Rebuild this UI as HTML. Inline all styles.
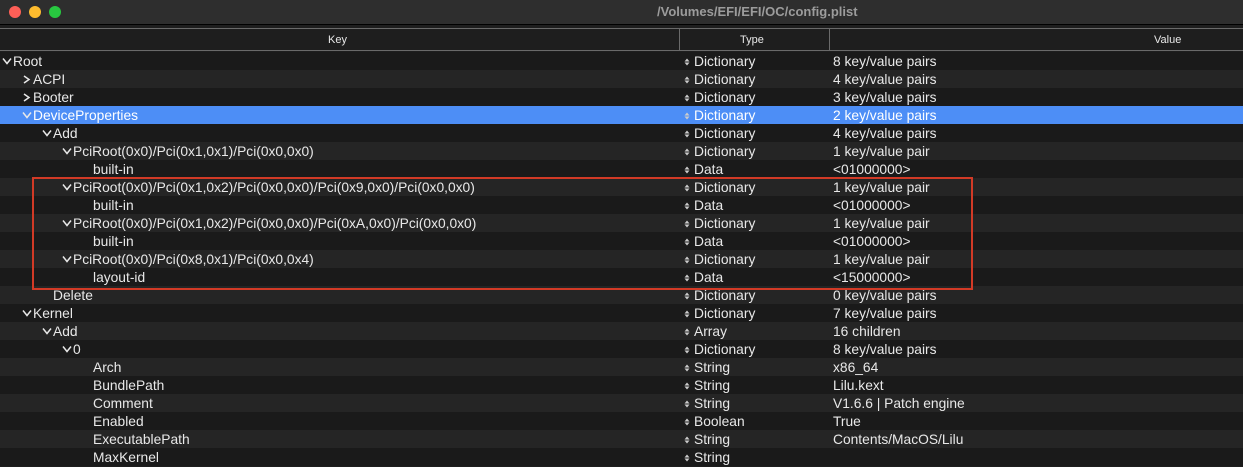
<!DOCTYPE html>
<html><head><style>
*{margin:0;padding:0;box-sizing:border-box}
body{width:1243px;height:456px;background:#1e1e1e;font-family:"Liberation Sans",sans-serif;color:#e8e8e8;font-size:13.8px;overflow:hidden;position:relative}
.tb{position:absolute;left:0;top:0;width:1243px;height:25px;background:#2e2e2e;border-bottom:1px solid #000}
.dot{position:absolute;top:6px;width:12px;height:12px;border-radius:50%}
.title{position:absolute;left:657px;top:4px;font-weight:bold;color:#9c9c9c;font-size:13px}
.hd{position:absolute;left:0;top:28px;width:1243px;height:23px;background:#1e1e1e;border-top:1px solid #6a6a6a;border-bottom:1px solid #6a6a6a;font-size:11px}
.hd span{position:absolute;top:5px}
.vs{position:absolute;top:0;width:1px;height:22px;background:#6a6a6a}
.row{position:absolute;left:0;width:1243px;height:18px;line-height:19px}
.row span{position:absolute;top:0;white-space:nowrap}
.e{background:#1a1a1a}.o{background:#252525}
.sel{background:#4d8ef6!important;color:#fff}
.row svg{position:absolute;top:5px}
.ar{font-size:10px;color:#ccc}
.box{position:absolute;left:32px;top:177px;width:941px;height:113px;border:2.5px solid #d23a26}
</style></head><body>
<div class="tb">
<div class="dot" style="left:9px;background:#fe5f57"></div>
<div class="dot" style="left:29px;background:#febc2e"></div>
<div class="dot" style="left:49px;background:#28c840"></div>
<div class="title">/Volumes/EFI/EFI/OC/config.plist</div>
</div>
<div class="hd">
<span style="left:328px">Key</span>
<div class="vs" style="left:679px"></div>
<span style="left:740px">Type</span>
<div class="vs" style="left:829px"></div>
<span style="left:1154px">Value</span>
</div>
<div id="rows"></div>
<div class="box"></div>
<script>
var d=[
[0,'v','Root','Dictionary','8 key/value pairs'],
[1,'>','ACPI','Dictionary','4 key/value pairs'],
[1,'>','Booter','Dictionary','3 key/value pairs'],
[1,'v','DeviceProperties','Dictionary','2 key/value pairs'],
[2,'v','Add','Dictionary','4 key/value pairs'],
[3,'v','PciRoot(0x0)/Pci(0x1,0x1)/Pci(0x0,0x0)','Dictionary','1 key/value pair'],
[4,'','built-in','Data','&lt;01000000&gt;'],
[3,'v','PciRoot(0x0)/Pci(0x1,0x2)/Pci(0x0,0x0)/Pci(0x9,0x0)/Pci(0x0,0x0)','Dictionary','1 key/value pair'],
[4,'','built-in','Data','&lt;01000000&gt;'],
[3,'v','PciRoot(0x0)/Pci(0x1,0x2)/Pci(0x0,0x0)/Pci(0xA,0x0)/Pci(0x0,0x0)','Dictionary','1 key/value pair'],
[4,'','built-in','Data','&lt;01000000&gt;'],
[3,'v','PciRoot(0x0)/Pci(0x8,0x1)/Pci(0x0,0x4)','Dictionary','1 key/value pair'],
[4,'','layout-id','Data','&lt;15000000&gt;'],
[2,'','Delete','Dictionary','0 key/value pairs'],
[1,'v','Kernel','Dictionary','7 key/value pairs'],
[2,'v','Add','Array','16 children'],
[3,'v','0','Dictionary','8 key/value pairs'],
[4,'','Arch','String','x86_64'],
[4,'','BundlePath','String','Lilu.kext'],
[4,'','Comment','String','V1.6.6 | Patch engine'],
[4,'','Enabled','Boolean','True'],
[4,'','ExecutablePath','String','Contents/MacOS/Lilu'],
[4,'','MaxKernel','String','']];
var h='';
d.forEach(function(r,i){
var cls=(i%2?'o':'e')+(i==3?' sel':'');
var x=13+20*r[0];
h+='<div class="row '+cls+'" style="top:'+(52+18*i)+'px">';
if(r[1]=='v')h+='<svg style="left:'+(x-11)+'px" width="10" height="8"><path d="M1 1.5L5 6.5L9 1.5" stroke="#e8e8e8" stroke-width="1.5" fill="none"/></svg>';
if(r[1]=='>')h+='<svg style="left:'+(x-11)+'px" width="9" height="9"><path d="M2 1L7 4.5L2 8" stroke="#e8e8e8" stroke-width="1.5" fill="none"/></svg>';
h+='<span style="left:'+x+'px">'+r[2]+'</span>';
h+='<svg style="left:684px;top:6px" width="6" height="8"><path d="M0.5 3.5L3 0.5L5.5 3.5ZM0.5 4.5L3 7.5L5.5 4.5Z" fill="#ccc"/></svg><span style="left:694px">'+r[3]+'</span>';
h+='<span style="left:833px">'+r[4]+'</span></div>';
});
document.getElementById('rows').innerHTML=h;
</script>
</body></html>
